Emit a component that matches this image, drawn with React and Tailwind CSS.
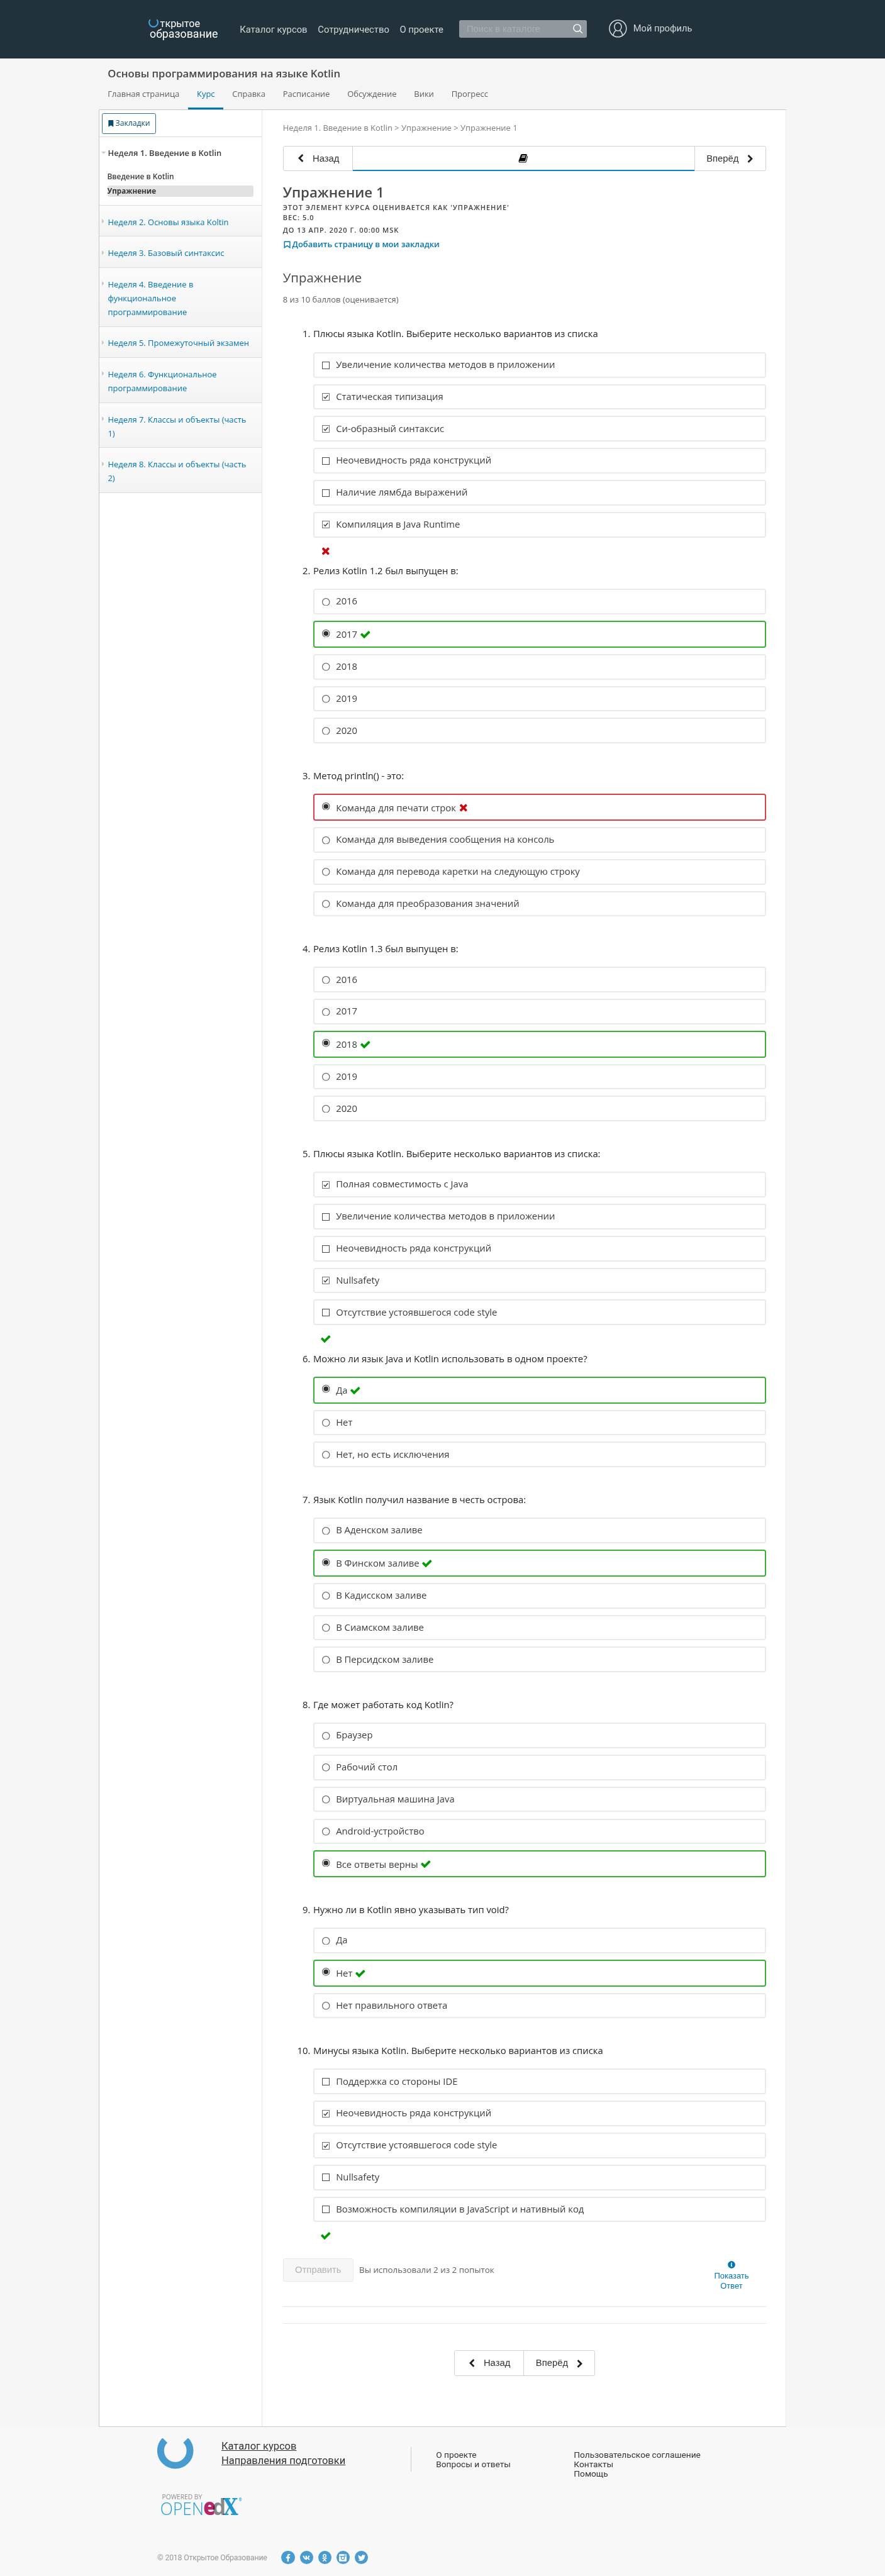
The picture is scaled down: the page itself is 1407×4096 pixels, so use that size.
import React from "react";
import {
  FaBookmark,
  FaInfoCircle,
  FaFacebookF,
  FaVk,
  FaOdnoklassniki,
  FaTwitter,
} from "react-icons/fa";

const CHECK =
  "M1671 566q0 40-28 68l-724 724-136 136q-28 28-68 28t-68-28l-136-136-362-362q-28-28-28-68t28-68l136-136q28-28 68-28t68 28l294 295 656-657q28-28 68-28t68 28l136 136q28 28 28 68z";
const CROSS =
  "M1490 1322q0 40-28 68l-136 136q-28 28-68 28t-68-28l-294-294-294 294q-28 28-68 28t-68-28l-136-136q-28-28-28-68t28-68l294-294-294-294q-28-28-28-68t28-68l136-136q28-28 68-28t68 28l294 294 294-294q28-28 68-28t68 28l136 136q28 28 28 68t-28 68l-294 294 294 294q28 28 28 68z";
const CHEVRON =
  "M1427 301l-531 531 531 531q19 19 19 45t-19 45l-166 166q-19 19-45 19t-45-19l-742-742q-19-19-19-45t19-45l742-742q19-19 45-19t45 19l166 166q19 19 19 45t-19 45z";
const BOOK =
  "M1703 478q40 57 18 129l-275 906q-19 64-76.5 107.5t-122.5 43.5h-923q-77 0-148.5-53.5t-99.5-131.5q-24-67-2-127 0-4 3-27t4-37q1-8-3-21.5t-3-19.5q2-11 8-21t16.5-23.5 16.5-23.5q23-38 45-91.5t30-91.5q3-10 .5-30t-.5-28q3-11 17-28t17-23q21-36 42-92t25-90q1-9-2.5-32t.5-28q4-13 22-30.5t22-22.5q19-26 42.5-84.5t27.5-96.5q1-8-3-25.5t-2-26.5q2-8 9-18t18-23 17-21q8-12 16.5-30.5t15-35 16-36 19.5-32 26.5-23.5 36-11.5 47.5 5.5l-1 3q38-9 51-9h761q74 0 114 56t18 130l-274 906q-36 119-71.5 153.5t-128.5 34.5h-869q-27 0-38 15-11 16-1 43 24 70 144 70h923q29 0 56-15.5t35-41.5l300-987q7-22 5-57 38 15 59 43zm-1064 2q-4 13 2 22.5t20 9.5h608q13 0 25.5-9.5t16.5-22.5l21-64q4-13-2-22.5t-20-9.5h-608q-13 0-25.5 9.5t-16.5 22.5zm-83 256q-4 13 2 22.5t20 9.5h608q13 0 25.5-9.5t16.5-22.5l21-64q4-13-2-22.5t-20-9.5h-608q-13 0-25.5 9.5t-16.5 22.5z";

function Glyph({ d, className }) {
  return (
    <svg viewBox="0 0 1792 1792" fill="currentColor" className={className}>
      <path d={d} />
    </svg>
  );
}

function Mark({ ok }) {
  return ok ? (
    <Glyph d={CHECK} className="h-[19px] w-[19px] shrink-0 text-[#009b00]" />
  ) : (
    <Glyph d={CROSS} className="h-[19px] w-[19px] shrink-0 text-[#cb0712]" />
  );
}

const questions = [
  {
    title: "Плюсы языка Kotlin. Выберите несколько вариантов из списка",
    multi: true,
    result: false,
    options: [
      ["Увеличение количества методов в приложении", 0],
      ["Статическая типизация", 1],
      ["Си-образный синтаксис", 1],
      ["Неочевидность ряда конструкций", 0],
      ["Наличие лямбда выражений", 0],
      ["Компиляция в Java Runtime", 1],
    ],
  },
  {
    title: "Релиз Kotlin 1.2 был выпущен в:",
    ok: true,
    options: [["2016", 0], ["2017", 1], ["2018", 0], ["2019", 0], ["2020", 0]],
  },
  {
    title: "Метод println() - это:",
    ok: false,
    options: [
      ["Команда для печати строк", 1],
      ["Команда для выведения сообщения на консоль", 0],
      ["Команда для перевода каретки на следующую строку", 0],
      ["Команда для преобразования значений", 0],
    ],
  },
  {
    title: "Релиз Kotlin 1.3 был выпущен в:",
    ok: true,
    options: [["2016", 0], ["2017", 0], ["2018", 1], ["2019", 0], ["2020", 0]],
  },
  {
    title: "Плюсы языка Kotlin. Выберите несколько вариантов из списка:",
    multi: true,
    result: true,
    options: [
      ["Полная совместимость с Java", 1],
      ["Увеличение количества методов в приложении", 0],
      ["Неочевидность ряда конструкций", 0],
      ["Nullsafety", 1],
      ["Отсутствие устоявшегося code style", 0],
    ],
  },
  {
    title: "Можно ли язык Java и Kotlin использовать в одном проекте?",
    ok: true,
    options: [["Да", 1], ["Нет", 0], ["Нет, но есть исключения", 0]],
  },
  {
    title: "Язык Kotlin получил название в честь острова:",
    ok: true,
    options: [
      ["В Аденском заливе", 0],
      ["В Финском заливе", 1],
      ["В Кадисском заливе", 0],
      ["В Сиамском заливе", 0],
      ["В Персидском заливе", 0],
    ],
  },
  {
    title: "Где может работать код Kotlin?",
    ok: true,
    options: [
      ["Браузер", 0],
      ["Рабочий стол", 0],
      ["Виртуальная машина Java", 0],
      ["Android-устройство", 0],
      ["Все ответы верны", 1],
    ],
  },
  {
    title: "Нужно ли в Kotlin явно указывать тип void?",
    ok: true,
    options: [["Да", 0], ["Нет", 1], ["Нет правильного ответа", 0]],
  },
  {
    title: "Минусы языка Kotlin. Выберите несколько вариантов из списка",
    multi: true,
    result: true,
    options: [
      ["Поддержка со стороны IDE", 0],
      ["Неочевидность ряда конструкций", 1],
      ["Отсутствие устоявшегося code style", 1],
      ["Nullsafety", 0],
      ["Возможность компиляции в JavaScript и нативный код", 0],
    ],
  },
];

function Checkbox({ on }) {
  return (
    <svg viewBox="0 0 13 13" className="mt-[13.700px] h-[13px] w-[13px] shrink-0">
      <rect x="0.6" y="0.6" width="11.800" height="11.800" fill="#fff" stroke={on ? "#707070" : "#4a4a4a"} strokeWidth="1.1" />
      {on ? <path d="M3 6.600l2.400 2.500L10 3.800" fill="none" stroke="#333" strokeWidth="1.4" /> : null}
    </svg>
  );
}

function Radio({ on }) {
  return (
    <svg viewBox="0 0 13 13" className={on ? "mt-[12.500px] h-[13.500px] w-[13.500px] shrink-0" : "mt-[13.500px] h-[13.500px] w-[13.500px] shrink-0"}>
      <circle cx="6.5" cy="6.5" r="5.9" fill="#fff" stroke="#555" strokeWidth="1.1" />
      {on ? <circle cx="6.5" cy="6.5" r="4" fill="#2e2e2e" /> : null}
    </svg>
  );
}

function Option({ label, on, multi, ok }) {
  const graded = on && !multi;
  const frame = graded
    ? ok
      ? "h-[46.2px] border-[2.2px] border-[#37b037]"
      : "h-[46.2px] border-[2.2px] border-[#d9414a]"
    : "h-[44px] border-[2.2px] border-[#eaeaea]";
  return (
    <div className={"flex items-start rounded-[4px] pl-[13px] " + frame}>
      {multi ? <Checkbox on={on} /> : <Radio on={on} />}
      <div
        className={
          "flex items-center text-[16px] leading-[24px] text-[#3c3c3c] " +
          (multi ? "ml-[10.500px] " : "ml-[10px] ") +
          (graded ? "mt-[9px]" : "mt-[6.700px]")
        }
      >
        {label}
        {graded ? (
          <span className="ml-[3.800px] flex">
            <Mark ok={ok} />
          </span>
        ) : null}
      </div>
    </div>
  );
}

function Question({ q, n }) {
  const last = n === questions.length;
  return (
    <div>
      <div className="flex text-[16px] leading-[24px] text-[#222]">
        <div className="w-[47px] shrink-0 text-right">{n}.</div>
        <div className="ml-[5px]">{q.title}</div>
      </div>
      <div className={"ml-[52.500px] flex flex-col gap-[10.840px] " + (n === 1 ? "mt-[20.6px]" : "mt-[19.5px]")}>
        {q.options.map(([label, on]) => (
          <Option key={label} label={label} on={!!on} multi={q.multi} ok={q.ok} />
        ))}
      </div>
      {q.multi ? (
        <div className={"pt-[13.5px] pl-[64.500px] " + (last ? "h-[62.3px]" : "h-[44.8px]")}>
          <Mark ok={q.result} />
        </div>
      ) : (
        <div className="h-[42.9px]" />
      )}
    </div>
  );
}

const weeks = [
  ["Неделя 2. Основы языка Koltin"],
  ["Неделя 3. Базовый синтаксис"],
  ["Неделя 4. Введение в", "функциональное", "программирование"],
  ["Неделя 5. Промежуточный экзамен"],
  ["Неделя 6. Функциональное", "программирование"],
  ["Неделя 7. Классы и объекты (часть", "1)"],
  ["Неделя 8. Классы и объекты (часть", "2)"],
];
const weekHeight = { 1: "h-[53.4px]", 2: "h-[77.3px]", 3: "h-[101.4px]" };

function Sidebar() {
  return (
    <aside className="w-[280px] shrink-0 border-r border-[#e7e7e7] text-[14px]">
      <div className="h-[46px] border-b border-[#dcdcdc] pt-[5px] pl-[4px]">
        <div className="flex h-[35.5px] w-[93.5px] items-center rounded-[3px] border border-[#2f7396] pl-[9px] text-[#0e4a6b]">
          <FaBookmark className="mr-[2px] h-[11.5px] w-[11.5px]" />
          <span className="text-[13.2px]">Закладки</span>
        </div>
      </div>
      <div className="h-[118px] border-b border-[#dcdcdc]">
        <div className="flex pt-[15.6px] leading-[24px] font-semibold text-[#3c3c3c]">
          <svg viewBox="0 0 8 4" className="mt-[10px] ml-[3.5px] h-[4px] w-[8px]">
            <path d="M0 0h8L4 4z" fill="#c8c8c8" />
          </svg>
          <span className="ml-[3px]">Неделя 1. Введение в Kotlin</span>
        </div>
        <div className="mt-[18.4px] ml-[13.5px] text-[12.9px] leading-[20px] font-semibold text-[#3c3c3c]">Введение в Kotlin</div>
        <div className="mt-[5px] ml-[13.5px] h-[20px] w-[251px] rounded-[4px] bg-[#e2e2e2] text-[12.6px] leading-[20px] font-bold text-[#333]">
          Упражнение
        </div>
      </div>
      {weeks.map((lines) => (
        <div
          key={lines.join()}
          className={"flex border-b border-[#dcdcdc] bg-linear-to-b from-[#fbfbfb] to-[#f3f3f3] pt-[15.800px] leading-[24px] text-[#0075b4] " + weekHeight[lines.length]}
        >
          <svg viewBox="0 0 4 8" className="mt-[7px] ml-[4px] h-[8px] w-[4px] shrink-0">
            <path d="M0 0v8L4 4z" fill="#c8c8c8" />
          </svg>
          <div className="ml-[6.5px]">
            {lines.map((l) => (
              <div key={l}>{l}</div>
            ))}
          </div>
        </div>
      ))}
    </aside>
  );
}

function Header() {
  return (
    <header className="flex h-[100px] bg-[#21323c] pl-[255px] font-[Roboto,sans-serif] text-[#d3d6d8]">
      <div className="mt-[32.500px] w-[156.5px] text-white">
        <div className="flex">
          <svg viewBox="0 0 17.400 15" className="h-[15px] w-[17.400px]">
            <path d="M3 1.200A7.500 7.500 0 1 0 14.400 1.200" fill="none" stroke="#4a9fd6" strokeWidth="2.3" />
          </svg>
          <span className="ml-[2.5px] text-[17.500px] leading-[17px]">ткрытое</span>
        </div>
        <div className="ml-[2px] text-[19.200px] leading-[18px]">образование</div>
      </div>
      <nav className="flex text-[16px] leading-[20px]">
        <span className="mt-[40.5px] w-[134px]">Каталог курсов</span>
        <span className="mt-[40.5px] w-[140.5px]">Сотрудничество</span>
        <span className="mt-[40.5px] w-[102px]">О проекте</span>
      </nav>
      <div className="mt-[35px] flex h-[30px] w-[219px] items-center justify-between rounded-[3px] bg-[#91999e] pr-[6px] pl-[13px]">
        <span className="font-['Liberation_Sans',sans-serif] text-[16px] text-[#a7afb3]">Поиск в каталоге</span>
        <svg viewBox="0 0 18 18" className="h-[17px] w-[17px]" fill="none" stroke="#fff" strokeWidth="1.6">
          <circle cx="7.500" cy="7.500" r="6.5" />
          <path d="M12 12l5 5" />
        </svg>
      </div>
      <svg viewBox="0 0 31 31" className="mt-[34px] ml-[38px] h-[31px] w-[31px]" fill="none" stroke="#d3d6d8" strokeWidth="1.7">
        <circle cx="15.500" cy="15.500" r="14.500" />
        <ellipse cx="15.500" cy="12.500" rx="6" ry="7" />
        <path d="M7.500 27.500c.5-4 2.300-7 4.500-8.500M23.500 27.500c-.5-4-2.300-7-4.500-8.500" />
      </svg>
      <span className="mt-[38.500px] ml-[11px] text-[15.800px] leading-[20px]">Мой профиль</span>
    </header>
  );
}

const tabs = ["Главная страница", "Курс", "Справка", "Расписание", "Обсуждение", "Вики", "Прогресс"];

function CourseHead() {
  return (
    <div className="h-[88px] pl-[170px]">
      <div className="pt-[14px] pl-[15px] text-[18px] leading-[24px] font-semibold text-[#474747]">
        Основы программирования на языке Kotlin
      </div>
      <div className="flex h-[50px] text-[14px] leading-[20px] text-[#5e5e5e]">
        {tabs.map((t) => (
          <div key={t} className={"px-[15px] pt-[13.6px] " + (t === "Курс" ? "border-b-[4px] border-[#0075b4] text-[#0075b4]" : "")}>
            {t}
          </div>
        ))}
      </div>
    </div>
  );
}

function Back() {
  return (
    <>
      <Glyph d={CHEVRON} className="h-[15px] w-[15px] text-[#222]" />
      <span className="ml-[13px]">Назад</span>
    </>
  );
}

function Next() {
  return (
    <>
      <span>Вперёд</span>
      <Glyph d={CHEVRON} className="ml-[13px] h-[15px] w-[15px] rotate-180 text-[#222]" />
    </>
  );
}

function Main() {
  return (
    <main className="w-[864px] pl-[35px]">
      <div className="pt-[20.6px] text-[14px] leading-[20px] text-[#7e7e7e]">
        Неделя 1. Введение в Kotlin &gt; Упражнение &gt; Упражнение 1
      </div>
      <div className="mt-[20.4px] flex h-[43.5px] rounded-[3px] border border-[#d2d2d2] font-['Liberation_Sans',sans-serif] text-[16px] text-[#333]">
        <div className="flex w-[119px] items-center border-r border-[#d2d2d2] pl-[22px]">
          <Back />
        </div>
        <div className="-mb-px flex grow items-center justify-center border-b-[3px] border-[#0d83c4]">
          <Glyph d={BOOK} className="mt-[1px] h-[17px] w-[17px] text-black" />
        </div>
        <div className="flex w-[122px] items-center border-l border-[#d2d2d2] pl-[20px]">
          <Next />
        </div>
      </div>
      <div className="mt-[20.8px] text-[24px] leading-[32px] font-semibold text-[#474747]">Упражнение 1</div>
      <div className="mt-[1px] text-[11.900px] leading-[18px] font-[550] tracking-[1.050px] text-[#414141]">
        ЭТОТ ЭЛЕМЕНТ КУРСА ОЦЕНИВАЕТСЯ КАК 'УПРАЖНЕНИЕ'
      </div>
      <div className="text-[11.900px] leading-[18px] font-[550] tracking-[1.050px] text-[#414141]">ВЕС: 5.0</div>
      <div className="mt-[3.5px] text-[11.900px] leading-[18px] font-[550] tracking-[1.050px] text-[#414141]">ДО 13 АПР. 2020 Г. 00:00 MSK</div>
      <div className="mt-[4.8px] flex items-center text-[14px] leading-[20px] font-semibold text-[#0075b4]">
        <svg viewBox="0 0 12 13" className="mr-[2.500px] ml-[1.500px] h-[13px] w-[12px]">
          <path d="M1.300 1.300h9.400v10.400L6 8.200l-4.700 3.500z" fill="none" stroke="currentColor" strokeWidth="1.5" />
        </svg>
        Добавить страницу в мои закладки
      </div>
      <div className="mt-[32.6px] text-[22px] leading-[30px] text-[#474747]">Упражнение</div>
      <div className="mt-[12.4px] text-[14px] leading-[20px] text-[#5e5e5e]">8 из 10 баллов (оценивается)</div>
      <div className="mt-[35.2px]">
        {questions.map((q, i) => (
          <Question key={i} q={q} n={i + 1} />
        ))}
      </div>
      <div className="flex h-[81.5px] items-start">
        <div className="flex h-[39.5px] w-[121px] items-center justify-center rounded-[3px] border border-[#e8e8e8] bg-[#f7f7f7] font-['Liberation_Sans',sans-serif] text-[16px] text-[#b3b3b3]">
          Отправить
        </div>
        <span className="mt-[10px] ml-[10px] text-[14.400px] leading-[20px] text-[#5e5e5e]">Вы использовали 2 из 2 попыток</span>
        <div className="mt-[4.500px] mr-[29px] ml-auto flex w-[60px] flex-col items-center font-['Liberation_Sans',sans-serif] text-[14px] leading-[17px] text-[#0075b4]">
          <FaInfoCircle className="mb-[4px] h-[13px] w-[13px]" />
          <span>Показать</span>
          <span>Ответ</span>
        </div>
      </div>
      <div className="h-[30.5px] border-t border-b border-[#e5e5e5]" />
      <div className="mt-[45.5px] ml-[293.5px] flex h-[44.5px] w-[242px] rounded-[3px] border border-[#d2d2d2] font-['Liberation_Sans',sans-serif] text-[16px] text-[#333]">
        <div className="flex w-[119.5px] items-center border-r border-[#d2d2d2] pl-[22px]">
          <Back />
        </div>
        <div className="flex items-center pl-[20px]">
          <Next />
        </div>
      </div>
    </main>
  );
}

function Camera({ className }) {
  return (
    <svg viewBox="0 0 40 38" className={className}>
      <rect width="40" height="38" rx="4" fill="#fff" />
      <path d="M3 11h34" stroke="#489bce" strokeWidth="3.500" />
      <circle cx="20" cy="20" r="8.500" fill="#fff" stroke="#489bce" strokeWidth="4" />
      <rect x="28" y="3" width="8" height="7" fill="#fff" stroke="#489bce" strokeWidth="2" />
    </svg>
  );
}

const socials = [FaFacebookF, FaVk, FaOdnoklassniki, Camera, FaTwitter];

function OpenEdx() {
  return (
    <svg viewBox="-12 -30 450 195" className="mt-[-10px] ml-[2px] h-[65px] w-[150px] font-['Open_Sans',sans-serif]">
      <text x="6" y="30" fontSize="33" fill="#8c8c8c" textLength="206" lengthAdjust="spacingAndGlyphs">POWERED BY</text>
      <text x="-3" y="112" fontSize="91" fontWeight="300" fill="#1d9dd9" textLength="224" lengthAdjust="spacingAndGlyphs">OPEN</text>
      <text x="219" y="112" fontSize="118" fontWeight="800" fill="#b52568" textLength="63" lengthAdjust="spacingAndGlyphs">e</text>
      <text x="265" y="112" fontSize="113" fontWeight="700" fill="#8a8c8f" textLength="70" lengthAdjust="spacingAndGlyphs" className="mix-blend-multiply">d</text>
      <text x="320" y="112" fontSize="118" fontWeight="700" fill="#1d9dd9" textLength="78" lengthAdjust="spacingAndGlyphs" className="font-['DejaVu_Serif',serif] mix-blend-multiply">X</text>
      <text x="401" y="42" fontSize="20" fontWeight="700" fill="#1d9dd9">®</text>
    </svg>
  );
}

function Footer() {
  return (
    <footer className="h-[256px] bg-[#f8f8f8] pl-[270px] font-[Roboto,sans-serif] text-[#333]">
      <div className="flex h-[114px]">
        <svg viewBox="0 0 62 52.500" className="mt-[20px] h-[52.500px] w-[62px]">
          <path d="M13.200 3.500A25.200 25.200 0 1 0 48.800 3.500" fill="none" stroke="#489bce" strokeWidth="11.800" />
        </svg>
        <div className="mt-[20.500px] ml-[48px] w-[325px] text-[17.800px] leading-[25px]">
          <div className="underline">Каталог курсов</div>
          <div className="underline">Направления подготовки</div>
        </div>
        <div className="mt-[35px] h-[42px] w-px bg-[#cfcfcf]" />
        <div className="mt-[40px] ml-[42.500px] w-[236.500px] text-[14.800px] leading-[16px]">
          <div>О проекте</div>
          <div>Вопросы и ответы</div>
        </div>
        <div className="mt-[40px] text-[14.800px] leading-[16px]">
          <div>Пользовательское соглашение</div>
          <div>Контакты</div>
          <div>Помощь</div>
        </div>
      </div>
      <div className="flex h-[99px] items-start">
        <OpenEdx />
      </div>
      <div className="flex h-[23px] items-center">
        <span className="w-[224.500px] text-[13.300px] tracking-[-0.2px] text-[#999] -mr-[11.500px]">© 2018 Открытое Образование</span>
        <div className="flex gap-[8.500px]">
          {socials.map((Icon, i) => (
            <span key={i} className="flex h-[23px] w-[23px] items-center justify-center rounded-full bg-[#489bce] text-white">
              <Icon className="h-[13px] w-[13px]" />
            </span>
          ))}
        </div>
      </div>
    </footer>
  );
}

export default function App() {
  return (
    <div className="h-[4422px] w-[1519px] overflow-hidden bg-[#f5f5f5] font-['Open_Sans',sans-serif] [zoom:0.92627]">
      <Header />
      <CourseHead />
      <div className="ml-[169.500px] flex h-[3978px] w-[1180.500px] border-t border-r border-b border-l border-[#c8c8c8] border-r-[#ececec] bg-white">
        <Sidebar />
        <Main />
      </div>
      <Footer />
    </div>
  );
}
